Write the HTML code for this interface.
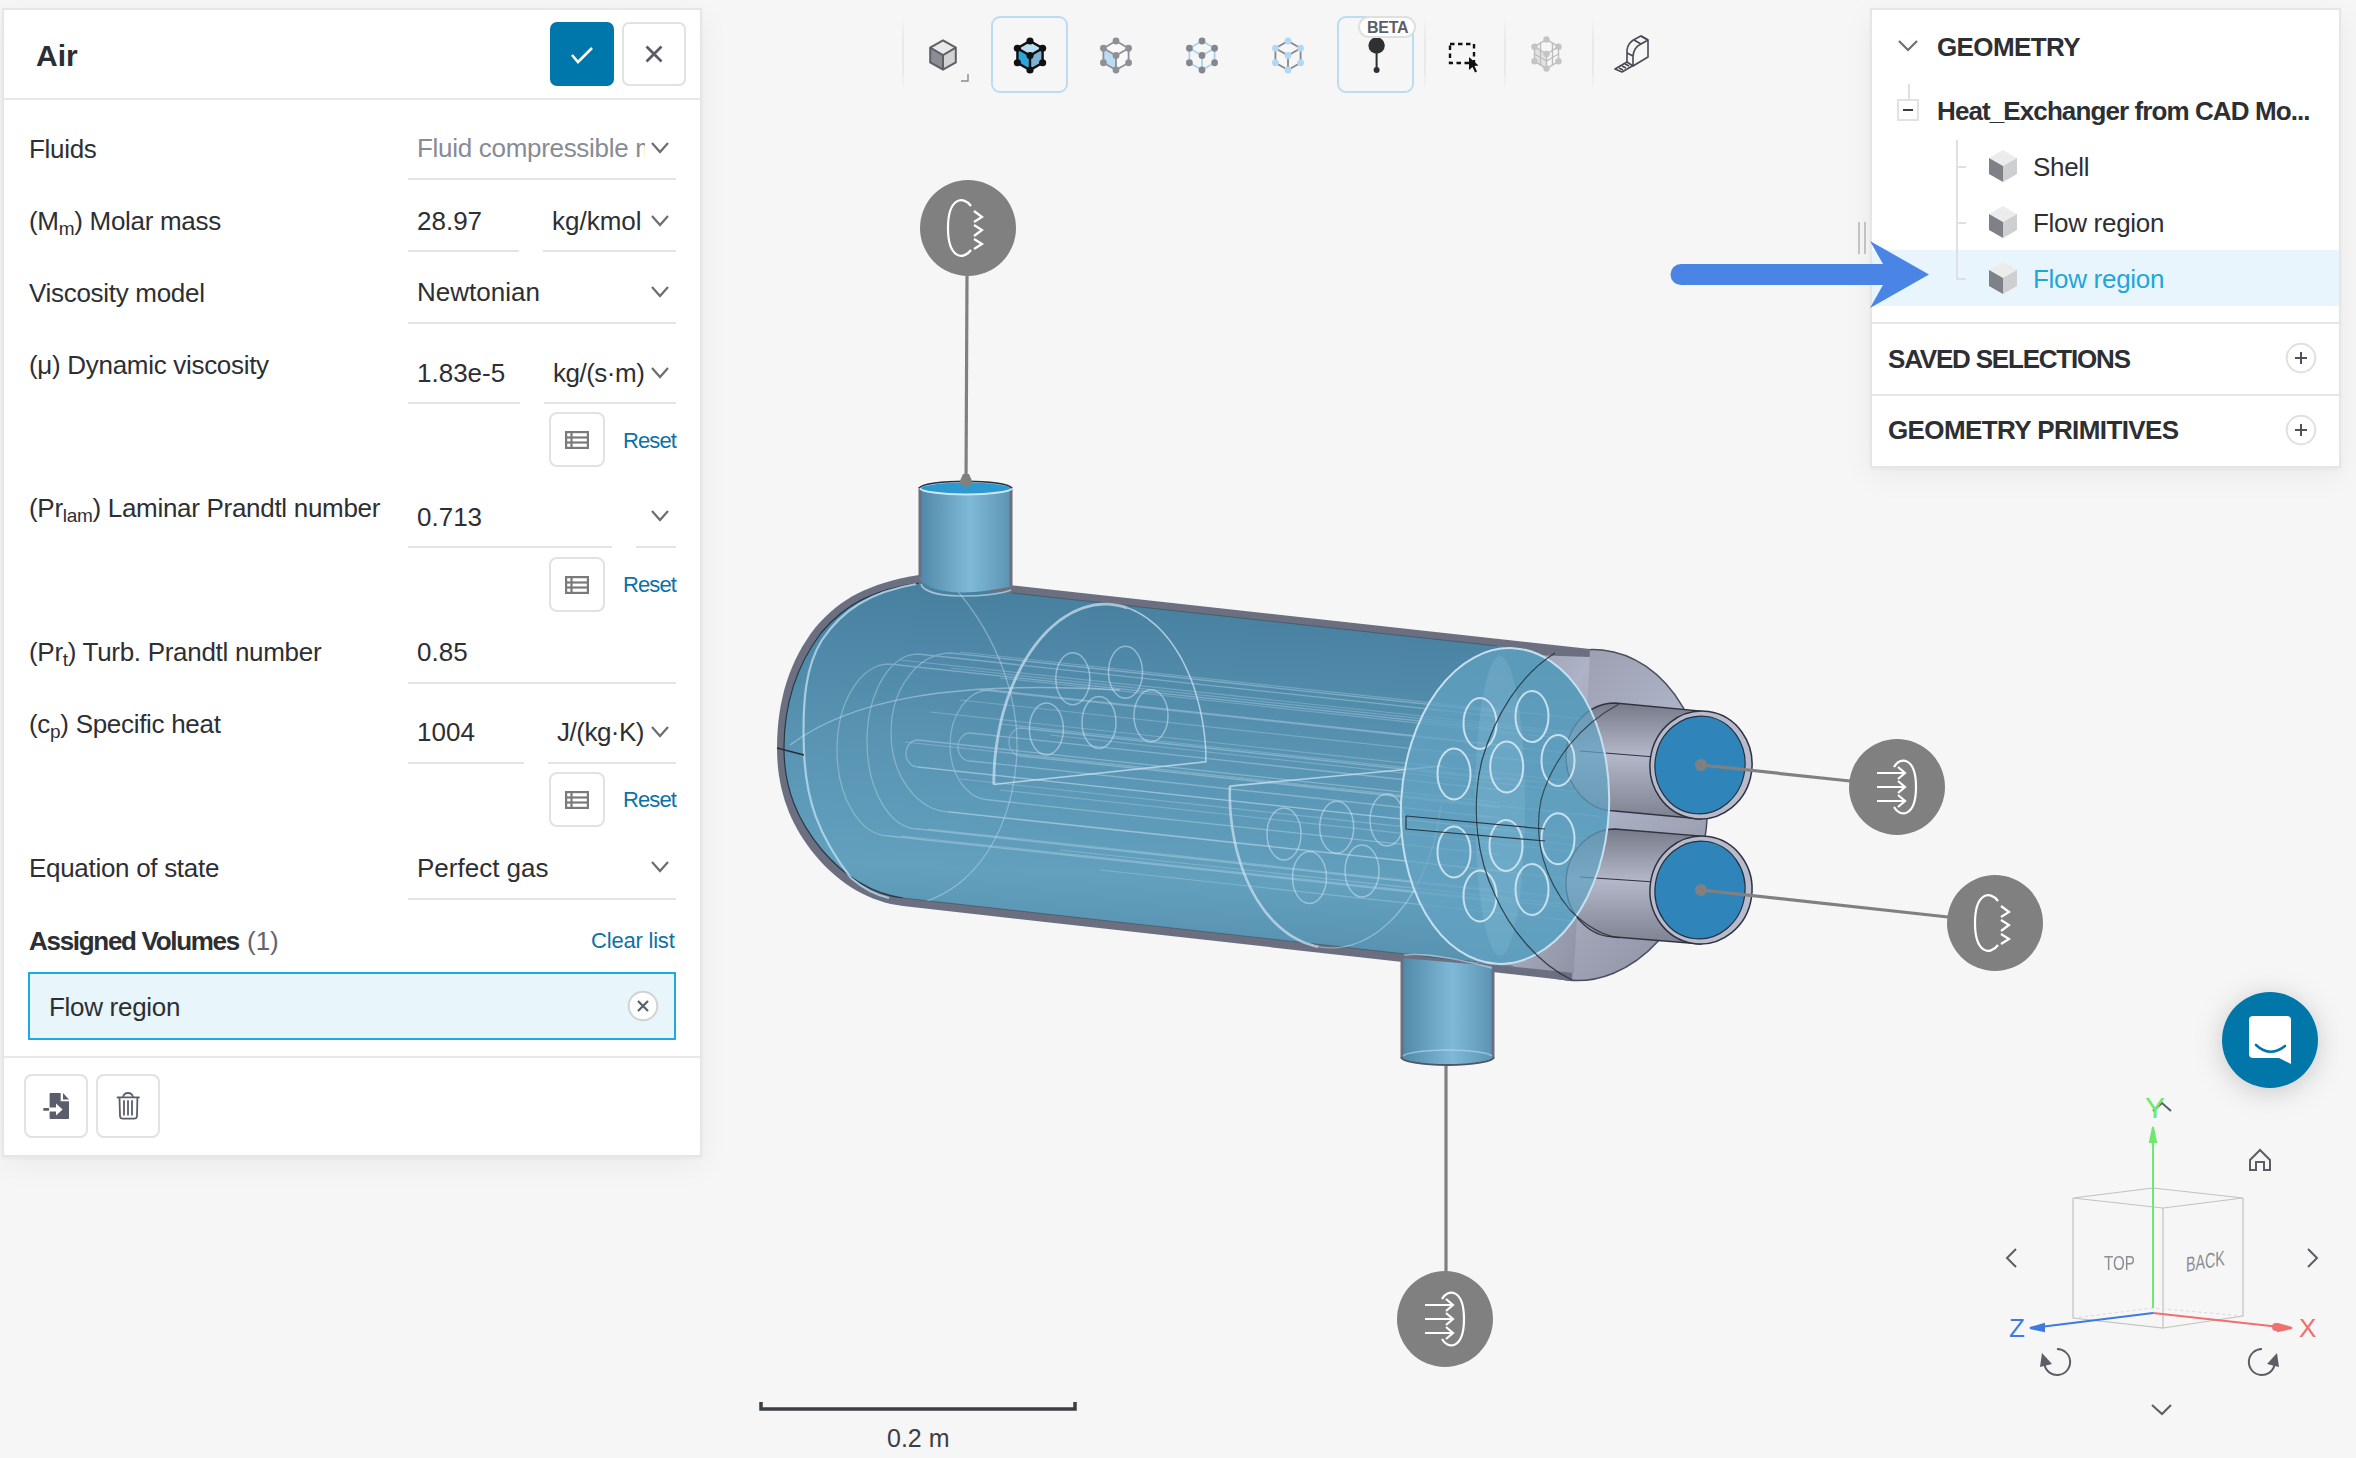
<!DOCTYPE html><html><head><meta charset="utf-8"><style>
html,body{margin:0;padding:0;width:2356px;height:1458px;overflow:hidden;background:#f6f6f6;font-family:"Liberation Sans",sans-serif;}
.t{position:absolute;line-height:1;white-space:nowrap;}
.r{position:absolute;}
svg.r{overflow:visible}
</style></head><body>
<svg class="r" style="left:0;top:0" width="2356" height="1458" viewBox="0 0 2356 1458">
<defs>
<linearGradient id="pipeV" x1="0" x2="1" y1="0" y2="0">
 <stop offset="0" stop-color="#4f88a6"/><stop offset="0.55" stop-color="#7fb9d8"/><stop offset="1" stop-color="#5a93b2"/>
</linearGradient>
<linearGradient id="bodyG" x1="0" x2="0" y1="0" y2="1" gradientTransform="rotate(6)">
 <stop offset="0" stop-color="#4880a0"/><stop offset="0.38" stop-color="#5893b2"/><stop offset="0.72" stop-color="#62a0be"/><stop offset="0.93" stop-color="#5590ae"/><stop offset="1" stop-color="#4a84a3"/>
</linearGradient>
<linearGradient id="domeG" x1="0" x2="1" y1="0" y2="1">
 <stop offset="0" stop-color="#8d91a1"/><stop offset="0.5" stop-color="#aeb2c6"/><stop offset="1" stop-color="#8b8fa0"/>
</linearGradient>
<linearGradient id="tubeG" x1="0" x2="0" y1="0" y2="1">
 <stop offset="0" stop-color="#767a88"/><stop offset="0.45" stop-color="#b3b7c9"/><stop offset="1" stop-color="#7d8190"/>
</linearGradient>
</defs>
<ellipse cx="1585" cy="815" rx="122" ry="166" transform="rotate(6 1585 815)" fill="url(#domeG)" stroke="#4a4d5c" stroke-width="1.5"/>
<path d="M919,575 L1590,649 L1572,981 L903,906 C870,902 840,885 815,855 C790,825 777,790 777,748 C777,700 790,660 815,628 C840,598 870,583 919,575 Z" fill="#6c6f80"/>
<path d="M1470,653 L1590,657 L1574,973 L1470,962 Z" fill="url(#domeG)"/>
<clipPath id="bodyClip"><path d="M919,583 L1497,646 L1513.3,648.2 L1521.4,649.1 L1529.4,651.0 L1537.3,653.8 L1545.0,657.6 L1552.4,662.3 L1559.5,667.9 L1566.3,674.3 L1572.7,681.5 L1578.7,689.6 L1584.3,698.3 L1589.3,707.7 L1593.9,717.7 L1597.9,728.2 L1601.3,739.2 L1604.1,750.6 L1606.3,762.4 L1607.9,774.5 L1608.9,786.7 L1609.2,799.0 L1608.9,811.4 L1607.9,823.8 L1606.3,836.1 L1604.1,848.1 L1601.2,859.9 L1597.8,871.4 L1593.8,882.5 L1589.2,893.1 L1584.2,903.1 L1578.6,912.6 L1572.6,921.4 L1566.2,929.5 L1559.4,936.8 L1552.2,943.4 L1544.8,949.1 L1537.1,953.9 L1529.2,957.7 L1521.2,960.7 L1513.1,962.7 L1504.9,963.7 L1496.7,963.8 L1513,966 L903,898 C872,894 846,878 822,850 C797,820 784,788 784,748 C784,703 797,665 821,633 C845,604 875,589 919,583 Z"/></clipPath>
<path d="M919,583 L1497,646 L1513.3,648.2 L1521.4,649.1 L1529.4,651.0 L1537.3,653.8 L1545.0,657.6 L1552.4,662.3 L1559.5,667.9 L1566.3,674.3 L1572.7,681.5 L1578.7,689.6 L1584.3,698.3 L1589.3,707.7 L1593.9,717.7 L1597.9,728.2 L1601.3,739.2 L1604.1,750.6 L1606.3,762.4 L1607.9,774.5 L1608.9,786.7 L1609.2,799.0 L1608.9,811.4 L1607.9,823.8 L1606.3,836.1 L1604.1,848.1 L1601.2,859.9 L1597.8,871.4 L1593.8,882.5 L1589.2,893.1 L1584.2,903.1 L1578.6,912.6 L1572.6,921.4 L1566.2,929.5 L1559.4,936.8 L1552.2,943.4 L1544.8,949.1 L1537.1,953.9 L1529.2,957.7 L1521.2,960.7 L1513.1,962.7 L1504.9,963.7 L1496.7,963.8 L1513,966 L903,898 C872,894 846,878 822,850 C797,820 784,788 784,748 C784,703 797,665 821,633 C845,604 875,589 919,583 Z" fill="url(#bodyG)"/>
<path d="M919,583 C875,589 845,604 821,633 C797,665 784,703 784,748 C784,788 797,820 822,850 C846,878 872,894 903,898" fill="none" stroke="#1f2a33" stroke-width="1.2" opacity="0.85"/>
<path d="M1012,593 L1497,646 M903,898 L1513,966" fill="none" stroke="#1f2a33" stroke-width="1" opacity="0.35"/>
<path d="M916,584 C870,592 842,610 822,640 C806,665 802,700 804,752 C806,800 818,835 851,878 C865,890 880,896 889,898" fill="none" stroke="#bcdcee" stroke-width="2.2" opacity="0.8"/>
<path d="M777,748 L804,755" stroke="#2a2e36" stroke-width="1.5"/>
<g clip-path="url(#bodyClip)">
<path d="M790,745 C850,700 950,680 1120,690" fill="none" stroke="#cfe6f3" stroke-width="1.3" opacity="0.45"/>
<path d="M955,588 C1000,640 1018,700 1017,748 C1016,800 998,850 962,881 C945,895 925,903 908,906" fill="none" stroke="#cfe6f3" stroke-width="1.3" opacity="0.4"/>
<g stroke="#cfe6f3" stroke-width="1.2" opacity="0.28" fill="none"><line x1="960" y1="652" x2="1600" y2="720.8"/><line x1="900" y1="660" x2="1600" y2="735.2"/><line x1="950" y1="668" x2="1600" y2="737.9"/><line x1="1000" y1="678" x2="1600" y2="742.5"/><line x1="980" y1="690" x2="1600" y2="756.6"/><line x1="960" y1="700" x2="1600" y2="768.8"/><line x1="930" y1="712" x2="1600" y2="784.0"/><line x1="1000" y1="724" x2="1600" y2="788.5"/><line x1="1050" y1="735" x2="1600" y2="794.1"/><line x1="905" y1="742" x2="1600" y2="816.7"/><line x1="1000" y1="752" x2="1600" y2="816.5"/><line x1="918" y1="767" x2="1600" y2="840.3"/><line x1="960" y1="779" x2="1600" y2="847.8"/><line x1="1000" y1="790" x2="1600" y2="854.5"/><line x1="948" y1="812" x2="1600" y2="882.1"/><line x1="928" y1="829" x2="1600" y2="901.2"/><line x1="901" y1="836" x2="1600" y2="911.1"/><line x1="1060" y1="850" x2="1600" y2="908.0"/><line x1="1100" y1="870" x2="1600" y2="923.8"/></g>
<g stroke="#cfe6f3" stroke-width="1.3" opacity="0.36" fill="none"><path d="M1500,729.7 L889,664 A52,86.0 0 0 0 889,836 L1500,901.7"/><path d="M1500,716.6 L918,654 A51,87.5 0 0 0 918,829 L1500,891.6"/><path d="M1500,712.0 L951,653 A60,79.5 0 0 0 951,812 L1500,871.0"/><path d="M1500,744.8 L990,690 A40,55.0 0 0 0 990,800 L1500,854.8"/><path d="M1500,802.6 L918,740 A12,13.5 0 0 0 918,767 L1500,829.6"/><path d="M1500,790.0 L970,733 A12,14.0 0 0 0 970,761 L1500,818.0"/><path d="M1500,779.5 L1021,728 A12,14.0 0 0 0 1021,756 L1500,807.5"/></g>
</g>
<g fill="none" stroke="#cfe6f3" opacity="0.75"><path d="M993.8,784.4 L993.9,776.5 L994.2,768.7 L994.7,760.9 L995.5,753.1 L996.5,745.4 L997.7,737.7 L999.1,730.1 L1000.7,722.6 L1002.5,715.2 L1004.6,707.9 L1006.8,700.8 L1009.3,693.8 L1011.9,687.0 L1014.7,680.4 L1017.7,674.0 L1020.8,667.8 L1024.2,661.8 L1027.7,656.1 L1031.3,650.6 L1035.1,645.4 L1039.0,640.4 L1043.1,635.7 L1047.2,631.3 L1051.5,627.2 L1055.9,623.5 L1060.3,620.0 L1064.9,616.9 L1069.5,614.1 L1074.2,611.6 L1079.0,609.5 L1083.8,607.7 L1088.6,606.3 L1093.4,605.2 L1098.3,604.5 L1103.2,604.2 L1108.0,604.2 L1112.9,604.6 L1117.7,605.3 L1122.5,606.4 L1127.2,607.8" stroke-width="2.8" stroke="#c8def0"/><path d="M1127.2,607.8 L1130.3,608.9 L1133.4,610.2 L1136.5,611.7 L1139.5,613.3 L1142.5,615.1 L1145.5,617.0 L1148.4,619.1 L1151.2,621.3 L1154.0,623.6 L1156.8,626.1 L1159.5,628.7 L1162.2,631.5 L1164.8,634.4 L1167.3,637.4 L1169.8,640.6 L1172.2,643.9 L1174.6,647.3 L1176.8,650.8 L1179.0,654.4 L1181.2,658.2 L1183.2,662.0 L1185.2,666.0 L1187.1,670.1 L1188.9,674.2 L1190.7,678.5 L1192.3,682.8 L1193.9,687.3 L1195.3,691.8 L1196.7,696.4 L1198.0,701.1 L1199.2,705.8 L1200.3,710.6 L1201.4,715.5 L1202.3,720.4 L1203.1,725.4 L1203.8,730.4 L1204.5,735.4 L1205.0,740.5 L1205.5,745.7 L1205.8,750.8" stroke-width="1.5"/><path d="M1205.8,750.8 L1205.8,761.8 L993.8,784.4" stroke-width="1.5"/><ellipse cx="1072.8" cy="678.8" rx="17" ry="26" stroke-width="1.5" opacity="0.7"/><ellipse cx="1125.5" cy="672.2" rx="17" ry="26" stroke-width="1.5" opacity="0.7"/><ellipse cx="1046.4" cy="729" rx="17" ry="26" stroke-width="1.5" opacity="0.7"/><ellipse cx="1099" cy="722.4" rx="17" ry="26" stroke-width="1.5" opacity="0.7"/><ellipse cx="1151" cy="715.8" rx="17" ry="26" stroke-width="1.5" opacity="0.7"/></g>
<g fill="none" stroke="#cfe6f3" opacity="0.75"><path d="M1229.9,786.1 L1229.8,792.0 L1229.8,797.8 L1230.0,803.7 L1230.3,809.5 L1230.8,815.3 L1231.4,821.0 L1232.1,826.7 L1233.0,832.3 L1234.0,837.9 L1235.1,843.4 L1236.4,848.9 L1237.8,854.2 L1239.3,859.5 L1240.9,864.7 L1242.7,869.8 L1244.6,874.7 L1246.6,879.6 L1248.8,884.3 L1251.0,888.9 L1253.4,893.3 L1255.8,897.7 L1258.4,901.8 L1261.1,905.8 L1263.9,909.7 L1266.7,913.4 L1269.7,916.9 L1272.8,920.3 L1275.9,923.5 L1279.1,926.5 L1282.4,929.3 L1285.7,931.9 L1289.1,934.4 L1292.6,936.6 L1296.2,938.7 L1299.8,940.5 L1303.4,942.2 L1307.1,943.6 L1310.8,944.8 L1314.5,945.9 L1318.3,946.7" stroke-width="2.6" stroke="#c8def0"/><path d="M1318.3,946.7 L1322.5,947.3 L1326.6,947.7 L1330.8,947.9 L1334.9,947.8 L1339.1,947.4 L1343.3,946.8 L1347.4,946.0 L1351.6,944.9 L1355.7,943.5 L1359.7,942.0 L1363.8,940.1 L1367.8,938.1 L1371.7,935.8 L1375.6,933.3 L1379.5,930.5 L1383.3,927.5 L1386.9,924.3 L1390.6,920.9 L1394.1,917.3 L1397.5,913.5 L1400.9,909.5 L1404.1,905.3 L1407.3,900.9 L1410.3,896.3 L1413.2,891.6 L1416.0,886.7 L1418.7,881.6 L1421.3,876.4 L1423.7,871.1 L1426.0,865.6 L1428.1,860.0 L1430.1,854.3 L1432.0,848.5 L1433.7,842.6 L1435.3,836.6 L1436.7,830.5 L1437.9,824.4 L1439.0,818.2 L1439.9,811.9 L1440.7,805.6" stroke-width="1.3" opacity="0.6"/><path d="M1229.9,786.1 L1442,766" stroke-width="1.6"/><ellipse cx="1284" cy="834" rx="17" ry="26" stroke-width="1.5" opacity="0.7"/><ellipse cx="1336.7" cy="827.3" rx="17" ry="26" stroke-width="1.5" opacity="0.7"/><ellipse cx="1387" cy="820" rx="17" ry="26" stroke-width="1.5" opacity="0.7"/><ellipse cx="1309.5" cy="877.5" rx="17" ry="26" stroke-width="1.5" opacity="0.7"/><ellipse cx="1362" cy="871" rx="17" ry="26" stroke-width="1.5" opacity="0.7"/></g>
<path d="M1615,703 L1701,711 L1701,819 L1615,811 A49,54 0 0 1 1615,703 Z" fill="url(#tubeG)" stroke="#2f3240" stroke-width="1.3"/>
<line x1="1580" y1="751" x2="1655" y2="757" stroke="#2f3240" stroke-width="1.2"/><path d="M1615,829 L1701,836 L1701,944 L1615,937 A49,54 0 0 1 1615,829 Z" fill="url(#tubeG)" stroke="#2f3240" stroke-width="1.3"/>
<line x1="1580" y1="877" x2="1655" y2="882" stroke="#2f3240" stroke-width="1.2"/><ellipse cx="1505" cy="806" rx="104" ry="158" transform="rotate(3 1505 806)" fill="#62a2c2" fill-opacity="0.72" stroke="#c4e0f0" stroke-width="2"/>
<ellipse cx="1500" cy="806" rx="25" ry="150" fill="#9fd0ea" opacity="0.18"/>
<g fill="none" stroke="#d8ecf7" stroke-width="2" opacity="0.85"><ellipse cx="1480" cy="723.5" rx="16.5" ry="25.5"/><ellipse cx="1532" cy="716.6" rx="16.5" ry="25.5"/><ellipse cx="1454" cy="774" rx="16.5" ry="25.5"/><ellipse cx="1506.7" cy="767" rx="16.5" ry="25.5"/><ellipse cx="1558" cy="760.5" rx="16.5" ry="25.5"/><ellipse cx="1454" cy="852" rx="16.5" ry="25.5"/><ellipse cx="1506" cy="845.5" rx="16.5" ry="25.5"/><ellipse cx="1558" cy="838.7" rx="16.5" ry="25.5"/><ellipse cx="1480" cy="896" rx="16.5" ry="25.5"/><ellipse cx="1532" cy="889.4" rx="16.5" ry="25.5"/></g>
<path d="M1406,816 L1545,829 M1406,816 L1406,829 L1545,841" fill="none" stroke="#2b3a44" stroke-width="1.2"/>
<path d="M1555,653 C1520,675 1495,715 1482,760 C1470,810 1478,860 1495,895 C1510,930 1540,965 1572,980" fill="none" stroke="#1d2a33" stroke-width="1.2" opacity="0.8"/>
<path d="M1619,704 C1580,725 1552,760 1541,800 C1533,840 1545,880 1570,910 C1585,925 1600,935 1619,938" fill="none" stroke="#1d2a33" stroke-width="1.1" opacity="0.75"/>
<ellipse cx="1701" cy="765" rx="51" ry="54" transform="rotate(8 1701 765)" fill="#b7bbcb" stroke="#2f3240" stroke-width="1.5"/>
<ellipse cx="1700" cy="765" rx="45" ry="49" transform="rotate(8 1700 765)" fill="#2f85ba" stroke="#233040" stroke-width="1.2"/>
<ellipse cx="1701" cy="890" rx="51" ry="54" transform="rotate(8 1701 890)" fill="#b7bbcb" stroke="#2f3240" stroke-width="1.5"/>
<ellipse cx="1700" cy="890" rx="45" ry="49" transform="rotate(8 1700 890)" fill="#2f85ba" stroke="#233040" stroke-width="1.2"/>
<path d="M919,487 L919,578 C930,595 970,596 1012,586 L1012,487 Z" fill="url(#pipeV)"/>
<path d="M920,487 L920,578 M1011,487 L1011,586" stroke="#6b6f80" stroke-width="3"/>
<path d="M921,584 C925,600 990,598 1011,590" fill="none" stroke="#c8dcea" stroke-width="1.6" opacity="0.7"/>
<ellipse cx="966" cy="488" rx="46" ry="6.5" fill="#2c9ad0" stroke="#cde6f3" stroke-width="2"/>
<path d="M919,488 A47,8 0 0 1 1012,488" fill="none" stroke="#2a2e38" stroke-width="1.5"/>
<path d="M1401,958 L1401,1057 A46,8 0 0 0 1494,1057 L1494,966 Z" fill="url(#pipeV)"/>
<path d="M1402,958 L1402,1057 M1493,966 L1493,1057" stroke="#6b6f80" stroke-width="3"/>
<path d="M1401,1057 A46.5,8 0 0 0 1494,1057" fill="none" stroke="#4d5563" stroke-width="1.8"/>
<path d="M1403,1056 A45,7 0 0 1 1492,1056" fill="none" stroke="#b9dcee" stroke-width="1.5" opacity="0.6"/>
<path d="M1404,955 C1430,952 1470,962 1492,968" fill="none" stroke="#c8dcea" stroke-width="1.5" opacity="0.6"/>
<g stroke="#808080" stroke-width="3.2" fill="none"><line x1="967" y1="276" x2="966" y2="487"/><line x1="1701" y1="765" x2="1850" y2="781"/><line x1="1701" y1="890" x2="1948" y2="917"/><line x1="1446" y1="1066" x2="1446" y2="1272"/></g>
<g fill="#808080"><path d="M963,474 L969,474 L973,483 Q966,490 959,483 Z"/><circle cx="1701" cy="765" r="6"/><circle cx="1701" cy="890" r="6"/></g>
<circle cx="968" cy="228" r="48" fill="#808080"/><circle cx="1897" cy="787" r="48" fill="#808080"/><circle cx="1995" cy="923" r="48" fill="#808080"/><circle cx="1445" cy="1319" r="48" fill="#808080"/><g transform="translate(968,228)" fill="none" stroke="#fff" stroke-width="2.2"><path d="M3,-22 C-5,-33 -20,-30 -20,0 C-20,30 -5,33 3,22"/><path d="M6,-17 L14,-11 L6,-6 M6,-3 L14,2 L6,8 M6,11 L14,16 L6,21"/></g><g transform="translate(1995,923)" fill="none" stroke="#fff" stroke-width="2.2"><path d="M3,-22 C-5,-33 -20,-30 -20,0 C-20,30 -5,33 3,22"/><path d="M6,-17 L14,-11 L6,-6 M6,-3 L14,2 L6,8 M6,11 L14,16 L6,21"/></g><g transform="translate(1897,787)" fill="none" stroke="#fff" stroke-width="2.2"><path d="M-3,-20 C3,-31 19,-30 19,0 C19,30 3,31 -3,20"/><path d="M-20,-14 L8,-14 M1,-20 L8,-14 L1,-8 M-20,0 L8,0 M1,-6 L8,0 L1,6 M-20,14 L8,14 M1,8 L8,14 L1,20"/></g><g transform="translate(1445,1319)" fill="none" stroke="#fff" stroke-width="2.2"><path d="M-3,-20 C3,-31 19,-30 19,0 C19,30 3,31 -3,20"/><path d="M-20,-14 L8,-14 M1,-20 L8,-14 L1,-8 M-20,0 L8,0 M1,-6 L8,0 L1,6 M-20,14 L8,14 M1,8 L8,14 L1,20"/></g>
<path d="M761,1402 L761,1409 L1075,1409 L1075,1402" fill="none" stroke="#3b3e44" stroke-width="3.5"/>
<g stroke="#c6c6c6" stroke-width="2"><line x1="1859" y1="222" x2="1859" y2="254"/><line x1="1865" y1="222" x2="1865" y2="254"/></g>
<circle cx="2270" cy="1040" r="48" fill="#0076a9" style="filter:drop-shadow(0 4px 14px rgba(0,0,0,0.18))"/>
<path d="M2253,1016 L2287,1016 Q2291,1016 2291,1020 L2291,1064 L2279,1058 L2253,1058 Q2249,1058 2249,1054 L2249,1020 Q2249,1016 2253,1016 Z" fill="#fff"/>
<path d="M2256,1045 Q2270,1058 2285,1046" fill="none" stroke="#0076a9" stroke-width="2.6" stroke-linecap="round"/>
<g fill="none" stroke="#c2c2c2" stroke-width="1.2"><path d="M2073,1198 L2153,1188 L2243,1198 L2163,1208 Z"/><path d="M2073,1198 L2073,1318 L2163,1328 L2163,1208"/><path d="M2163,1328 L2243,1316 L2243,1198"/></g>
<path d="M2073,1318 L2153,1308 L2243,1316" fill="none" stroke="#d8d8d8" stroke-width="1" stroke-dasharray="3,3"/>
<g stroke="#6ee86e" stroke-width="2" fill="#6ee86e"><line x1="2153" y1="1308" x2="2153" y2="1135"/><path d="M2153,1127 L2150,1142 L2156,1142 Z"/></g>
<g stroke="#3d7be0" stroke-width="2" fill="#3d7be0"><line x1="2153" y1="1313" x2="2040" y2="1327"/><path d="M2030,1328 L2044,1324 L2044,1331 Z"/></g>
<g stroke="#f07070" stroke-width="2" fill="#f07070"><line x1="2153" y1="1313" x2="2280" y2="1327"/><path d="M2292,1328 L2278,1324 L2278,1331 Z"/><circle cx="2276" cy="1327" r="3"/></g>
<g fill="none" stroke="#5b5e66" stroke-width="2"><polyline points="2153,1111 2162,1103 2171,1111"/><polyline points="2016,1249 2007,1258 2016,1267"/><polyline points="2308,1249 2317,1258 2308,1267"/><polyline points="2152,1405 2162,1414 2171,1405"/><path d="M2250,1170 L2250,1160 L2260,1150 L2270,1160 L2270,1170 L2264,1170 L2264,1162 L2256,1162 L2256,1170 Z"/><path d="M2057,1349 A13,13 0 1 1 2044.5,1365"/><path d="M2262,1349 A13,13 0 1 0 2274.5,1365"/></g>
<g fill="#5b5e66"><path d="M2042,1353 L2040,1367 L2052,1364 Z"/><path d="M2277,1353 L2279,1367 L2267,1364 Z"/></g>
</svg>
<div class="t" style="left:2145px;top:1092.6px;font-size:30px;color:#6ee86e;font-weight:normal;">Y</div>
<div class="t" style="left:2009px;top:1315.0px;font-size:26px;color:#3d7be0;font-weight:normal;">Z</div>
<div class="t" style="left:2299px;top:1315.0px;font-size:26px;color:#f07070;font-weight:normal;">X</div>
<div class="t" style="left:2104px;top:1252.2px;font-size:21px;color:#8a8d94;font-weight:normal;transform:scaleX(0.72);transform-origin:0 0">TOP</div>
<div class="t" style="left:2186px;top:1254.2px;font-size:21px;color:#8a8d94;font-weight:normal;transform:scaleX(0.68) skewY(-7deg);transform-origin:0 0">BACK</div>
<div class="t" style="left:887px;top:1425.8px;font-size:25px;color:#3b3e44;font-weight:normal;">0.2 m</div>
<div class="r" style="left:2px;top:8px;width:696px;height:1145px;background:#fff;border:2px solid #e6e6e6;box-shadow:0 2px 3px rgba(0,0,0,0.03),0 8px 30px rgba(0,0,0,0.05)"></div>
<div class="t" style="left:36px;top:40.6px;font-size:30px;color:#2d2e33;font-weight:bold;">Air</div>
<div class="r" style="left:550px;top:22px;width:64px;height:64px;background:#0077aa;border-radius:7px"></div>
<svg class="r" style="left:550px;top:22px" width="64" height="64"><polyline points="22,33 28,40 42,26" fill="none" stroke="#fff" stroke-width="2.6"/></svg>
<div class="r" style="left:622px;top:22px;width:64px;height:64px;box-sizing:border-box;border:2px solid #e2e2e2;border-radius:7px;background:#fff"></div>
<svg class="r" style="left:622px;top:22px" width="64" height="64"><path d="M24.5,24.5 L39.5,39.5 M39.5,24.5 L24.5,39.5" fill="none" stroke="#5a5d66" stroke-width="2.8"/></svg>
<div class="r" style="left:4px;top:98px;width:696px;height:2px;background:#e8e8e8"></div>
<div class="t" style="left:29px;top:136.0px;font-size:26px;color:#2d2f33;font-weight:normal;letter-spacing:-0.3px">Fluids</div>
<div class="t" style="left:29px;top:208.0px;font-size:26px;color:#2d2f33;font-weight:normal;letter-spacing:-0.3px">(M<sub style="font-size:19px;vertical-align:-5px;line-height:0">m</sub>) Molar mass</div>
<div class="t" style="left:29px;top:280.0px;font-size:26px;color:#2d2f33;font-weight:normal;letter-spacing:-0.3px">Viscosity model</div>
<div class="t" style="left:29px;top:352.0px;font-size:26px;color:#2d2f33;font-weight:normal;letter-spacing:-0.3px">(&mu;) Dynamic viscosity</div>
<div class="t" style="left:29px;top:495.0px;font-size:26px;color:#2d2f33;font-weight:normal;letter-spacing:-0.3px">(Pr<sub style="font-size:19px;vertical-align:-5px;line-height:0">lam</sub>) Laminar Prandtl number</div>
<div class="t" style="left:29px;top:639.0px;font-size:26px;color:#2d2f33;font-weight:normal;letter-spacing:-0.3px">(Pr<sub style="font-size:19px;vertical-align:-5px;line-height:0">t</sub>) Turb. Prandtl number</div>
<div class="t" style="left:29px;top:711.0px;font-size:26px;color:#2d2f33;font-weight:normal;letter-spacing:-0.3px">(c<sub style="font-size:19px;vertical-align:-5px;line-height:0">p</sub>) Specific heat</div>
<div class="t" style="left:29px;top:855.0px;font-size:26px;color:#2d2f33;font-weight:normal;letter-spacing:-0.3px">Equation of state</div>
<div class="r" style="left:417px;top:135.0px;width:228px;overflow:hidden;height:34px"><div class="t" style="left:0;top:0;font-size:26px;color:#878b94;letter-spacing:-0.3px">Fluid compressible medium</div></div>
<svg class="r" style="left:650px;top:141px" width="20" height="13"><polyline points="2,2 10.0,11 18,2" fill="none" stroke="#6b6e75" stroke-width="2.2"/></svg>
<div class="r" style="left:408px;top:178px;width:268px;height:2px;background:#e4e4e4"></div>
<div class="t" style="left:417px;top:208.0px;font-size:26px;color:#2d2f33;font-weight:normal;">28.97</div>
<div class="t" style="left:552px;top:208.0px;font-size:26px;color:#2d2f33;font-weight:normal;">kg/kmol</div>
<svg class="r" style="left:650px;top:214px" width="20" height="13"><polyline points="2,2 10.0,11 18,2" fill="none" stroke="#6b6e75" stroke-width="2.2"/></svg>
<div class="r" style="left:408px;top:250px;width:111px;height:2px;background:#e4e4e4"></div>
<div class="r" style="left:543px;top:250px;width:133px;height:2px;background:#e4e4e4"></div>
<div class="t" style="left:417px;top:279.0px;font-size:26px;color:#2d2f33;font-weight:normal;">Newtonian</div>
<svg class="r" style="left:650px;top:285px" width="20" height="13"><polyline points="2,2 10.0,11 18,2" fill="none" stroke="#6b6e75" stroke-width="2.2"/></svg>
<div class="r" style="left:408px;top:322px;width:268px;height:2px;background:#e4e4e4"></div>
<div class="t" style="left:417px;top:360.0px;font-size:26px;color:#2d2f33;font-weight:normal;">1.83e-5</div>
<div class="t" style="left:553px;top:360.0px;font-size:26px;color:#2d2f33;font-weight:normal;letter-spacing:-0.5px">kg/(s&middot;m)</div>
<svg class="r" style="left:650px;top:366px" width="20" height="13"><polyline points="2,2 10.0,11 18,2" fill="none" stroke="#6b6e75" stroke-width="2.2"/></svg>
<div class="r" style="left:408px;top:402px;width:112px;height:2px;background:#e4e4e4"></div>
<div class="r" style="left:544px;top:402px;width:132px;height:2px;background:#e4e4e4"></div>
<div class="r" style="left:549px;top:412px;width:56px;height:55px;box-sizing:border-box;border:2px solid #e2e2e2;border-radius:8px;background:#fff"></div>
<svg class="r" style="left:565px;top:431px" width="24" height="18"><g fill="none" stroke="#7a7a7a" stroke-width="2.2"><rect x="1.1" y="1.1" width="21.8" height="15.8"/><line x1="1" y1="6.5" x2="23" y2="6.5"/><line x1="1" y1="11.5" x2="23" y2="11.5"/><line x1="6.5" y1="1" x2="6.5" y2="17"/></g></svg>
<div class="t" style="left:623px;top:430.4px;font-size:22px;color:#0b72a8;font-weight:normal;letter-spacing:-0.9px">Reset</div>
<div class="t" style="left:417px;top:504.0px;font-size:26px;color:#2d2f33;font-weight:normal;">0.713</div>
<svg class="r" style="left:650px;top:509px" width="20" height="13"><polyline points="2,2 10.0,11 18,2" fill="none" stroke="#6b6e75" stroke-width="2.2"/></svg>
<div class="r" style="left:408px;top:546px;width:204px;height:2px;background:#e4e4e4"></div>
<div class="r" style="left:636px;top:546px;width:40px;height:2px;background:#e4e4e4"></div>
<div class="r" style="left:549px;top:557px;width:56px;height:55px;box-sizing:border-box;border:2px solid #e2e2e2;border-radius:8px;background:#fff"></div>
<svg class="r" style="left:565px;top:576px" width="24" height="18"><g fill="none" stroke="#7a7a7a" stroke-width="2.2"><rect x="1.1" y="1.1" width="21.8" height="15.8"/><line x1="1" y1="6.5" x2="23" y2="6.5"/><line x1="1" y1="11.5" x2="23" y2="11.5"/><line x1="6.5" y1="1" x2="6.5" y2="17"/></g></svg>
<div class="t" style="left:623px;top:574.4px;font-size:22px;color:#0b72a8;font-weight:normal;letter-spacing:-0.9px">Reset</div>
<div class="t" style="left:417px;top:639.0px;font-size:26px;color:#2d2f33;font-weight:normal;">0.85</div>
<div class="r" style="left:408px;top:682px;width:268px;height:2px;background:#e4e4e4"></div>
<div class="t" style="left:417px;top:719.0px;font-size:26px;color:#2d2f33;font-weight:normal;">1004</div>
<div class="t" style="left:557px;top:719.0px;font-size:26px;color:#2d2f33;font-weight:normal;letter-spacing:-0.5px">J/(kg&middot;K)</div>
<svg class="r" style="left:650px;top:725px" width="20" height="13"><polyline points="2,2 10.0,11 18,2" fill="none" stroke="#6b6e75" stroke-width="2.2"/></svg>
<div class="r" style="left:408px;top:762px;width:116px;height:2px;background:#e4e4e4"></div>
<div class="r" style="left:548px;top:762px;width:128px;height:2px;background:#e4e4e4"></div>
<div class="r" style="left:549px;top:772px;width:56px;height:55px;box-sizing:border-box;border:2px solid #e2e2e2;border-radius:8px;background:#fff"></div>
<svg class="r" style="left:565px;top:791px" width="24" height="18"><g fill="none" stroke="#7a7a7a" stroke-width="2.2"><rect x="1.1" y="1.1" width="21.8" height="15.8"/><line x1="1" y1="6.5" x2="23" y2="6.5"/><line x1="1" y1="11.5" x2="23" y2="11.5"/><line x1="6.5" y1="1" x2="6.5" y2="17"/></g></svg>
<div class="t" style="left:623px;top:789.4px;font-size:22px;color:#0b72a8;font-weight:normal;letter-spacing:-0.9px">Reset</div>
<div class="t" style="left:417px;top:855.0px;font-size:26px;color:#2d2f33;font-weight:normal;">Perfect gas</div>
<svg class="r" style="left:650px;top:860px" width="20" height="13"><polyline points="2,2 10.0,11 18,2" fill="none" stroke="#6b6e75" stroke-width="2.2"/></svg>
<div class="r" style="left:408px;top:898px;width:268px;height:2px;background:#e4e4e4"></div>
<div class="t" style="left:29px;top:928.0px;font-size:26px;color:#2d2f33;font-weight:bold;letter-spacing:-1.3px">Assigned Volumes</div>
<div class="t" style="left:247px;top:928.0px;font-size:26px;color:#60646e;font-weight:normal;">(1)</div>
<div class="t" style="left:591px;top:930.4px;font-size:22px;color:#0b72a8;font-weight:normal;letter-spacing:-0.2px">Clear list</div>
<div class="r" style="left:28px;top:972px;width:648px;height:68px;box-sizing:border-box;border:2.5px solid #1eaade;background:#e8f5fb"></div>
<div class="t" style="left:49px;top:994.0px;font-size:26px;color:#2d2f33;font-weight:normal;letter-spacing:-0.3px">Flow region</div>
<svg class="r" style="left:627px;top:990px" width="32" height="32"><circle cx="16" cy="16" r="14.3" fill="#fff" stroke="#d2d2d2" stroke-width="2"/><path d="M11,11 L21,21 M21,11 L11,21" stroke="#5b5f6b" stroke-width="2.2"/></svg>
<div class="r" style="left:4px;top:1056px;width:696px;height:2px;background:#e8e8e8"></div>
<div class="r" style="left:24px;top:1074px;width:64px;height:64px;box-sizing:border-box;border:2px solid #e2e2e2;border-radius:8px"></div>
<div class="r" style="left:96px;top:1074px;width:64px;height:64px;box-sizing:border-box;border:2px solid #e2e2e2;border-radius:8px"></div>
<svg class="r" style="left:40px;top:1090px" width="32" height="32"><path d="M10.6,3 L20.7,3 L20.7,11.2 L29,11.2 L29,28 Q29,29 28,29 L10.6,29 Q9.6,29 9.6,28 L9.6,4 Q9.6,3 10.6,3 Z" fill="#5a5e6b"/><path d="M23,3 L29,9.6 L23,9.6 Z" fill="#5a5e6b"/><path d="M9,17.6 L16,17.6 L16,13.4 L22.6,19.5 L16,25.4 L16,21.4 L9,21.4 Z" fill="#fff"/><rect x="3.2" y="18" width="6" height="2.8" rx="1" fill="#5a5e6b"/></svg>
<svg class="r" style="left:114px;top:1090px" width="30" height="32"><g fill="none" stroke="#5a5e6b" stroke-width="1.8" stroke-linecap="round"><path d="M3.5,7.4 L25,7.4"/><path d="M9,7 Q10,3 14,3 Q18,3 19,7"/><path d="M5.5,8 L6,26 Q6.2,28.7 9,28.7 L20,28.7 Q22.8,28.7 23,26 L23.4,8"/><path d="M10,11 L10,24.8 M14,11 L14,24.8 M18,11 L18,24.8"/></g></svg>
<div class="r" style="left:1870px;top:8px;width:467px;height:456px;background:#fff;border:2px solid #e6e6e6;box-shadow:0 2px 3px rgba(0,0,0,0.03),0 8px 30px rgba(0,0,0,0.05)"></div>
<svg class="r" style="left:1897px;top:39px" width="22" height="13"><polyline points="2,2 11.0,11 20,2" fill="none" stroke="#6b6e75" stroke-width="2.2"/></svg>
<div class="t" style="left:1937px;top:34.0px;font-size:26px;color:#2d2f33;font-weight:bold;letter-spacing:-0.6px">GEOMETRY</div>
<div class="r" style="left:1908px;top:84px;width:2px;height:15px;background:#e0e0e0"></div>
<div class="r" style="left:1897px;top:99px;width:22px;height:22px;box-sizing:border-box;border:2px solid #e2e2e2"></div>
<div class="r" style="left:1903px;top:109px;width:10px;height:2px;background:#3a3c42"></div>
<div class="t" style="left:1937px;top:98.0px;font-size:26px;color:#2d2f33;font-weight:bold;letter-spacing:-0.9px">Heat_Exchanger from CAD Mo...</div>
<div class="r" style="left:1872px;top:250px;width:467px;height:56px;background:#e9f5fc"></div>
<div class="r" style="left:1956px;top:140px;width:2px;height:139px;background:#e0e0e0"></div>
<div class="r" style="left:1956px;top:166px;width:10px;height:2px;background:#e0e0e0"></div>
<div class="r" style="left:1956px;top:222px;width:10px;height:2px;background:#e0e0e0"></div>
<div class="r" style="left:1956px;top:278px;width:10px;height:2px;background:#e0e0e0"></div>
<svg class="r" style="left:1989px;top:150px" width="28" height="32"><path d="M14,0 L28,8.0 L14,16 L0,8.0 Z" fill="#ececec"/><path d="M0,8.0 L14,16 L14,32 L0,24.0 Z" fill="#7f8189"/><path d="M28,8.0 L14,16 L14,32 L28,24.0 Z" fill="#cfcfd2"/></svg>
<div class="t" style="left:2033px;top:154.0px;font-size:26px;color:#2d2f33;font-weight:normal;letter-spacing:-0.3px">Shell</div>
<svg class="r" style="left:1989px;top:206px" width="28" height="32"><path d="M14,0 L28,8.0 L14,16 L0,8.0 Z" fill="#ececec"/><path d="M0,8.0 L14,16 L14,32 L0,24.0 Z" fill="#7f8189"/><path d="M28,8.0 L14,16 L14,32 L28,24.0 Z" fill="#cfcfd2"/></svg>
<div class="t" style="left:2033px;top:210.0px;font-size:26px;color:#2d2f33;font-weight:normal;letter-spacing:-0.3px">Flow region</div>
<svg class="r" style="left:1989px;top:262px" width="28" height="32"><path d="M14,0 L28,8.0 L14,16 L0,8.0 Z" fill="#ececec"/><path d="M0,8.0 L14,16 L14,32 L0,24.0 Z" fill="#7f8189"/><path d="M28,8.0 L14,16 L14,32 L28,24.0 Z" fill="#cfcfd2"/></svg>
<div class="t" style="left:2033px;top:266.0px;font-size:26px;color:#22a6da;font-weight:normal;letter-spacing:-0.3px">Flow region</div>
<div class="r" style="left:1872px;top:322px;width:467px;height:2px;background:#e6e6e6"></div>
<div class="r" style="left:1872px;top:394px;width:467px;height:2px;background:#e6e6e6"></div>
<div class="t" style="left:1888px;top:346.0px;font-size:26px;color:#2d2f33;font-weight:bold;letter-spacing:-1.2px">SAVED SELECTIONS</div>
<div class="t" style="left:1888px;top:417.0px;font-size:26px;color:#2d2f33;font-weight:bold;letter-spacing:-0.6px">GEOMETRY PRIMITIVES</div>
<svg class="r" style="left:2285px;top:342px" width="32" height="32"><circle cx="16" cy="16" r="14.3" fill="#fff" stroke="#e0e0e0" stroke-width="2"/><path d="M16,10 L16,22 M10,16 L22,16" stroke="#4f525c" stroke-width="2"/></svg>
<svg class="r" style="left:2285px;top:414px" width="32" height="32"><circle cx="16" cy="16" r="14.3" fill="#fff" stroke="#e0e0e0" stroke-width="2"/><path d="M16,10 L16,22 M10,16 L22,16" stroke="#4f525c" stroke-width="2"/></svg>
<svg class="r" style="left:0;top:0" width="2356" height="400"><path d="M1681,264 L1883,264 L1870,241 L1929,274.5 L1870,308 L1883,285 L1681,285 A10.5,10.5 0 0 1 1681,264 Z" fill="#4a84e4"/>
</svg>
<div class="r" style="left:902px;top:19px;width:2px;height:71px;background:linear-gradient(#f5f5f5,#e9e9e9 30%,#e9e9e9 70%,#f5f5f5)"></div>
<div class="r" style="left:1424px;top:19px;width:2px;height:71px;background:linear-gradient(#f5f5f5,#e9e9e9 30%,#e9e9e9 70%,#f5f5f5)"></div>
<div class="r" style="left:1504px;top:19px;width:2px;height:71px;background:linear-gradient(#f5f5f5,#e9e9e9 30%,#e9e9e9 70%,#f5f5f5)"></div>
<div class="r" style="left:1592px;top:19px;width:2px;height:71px;background:linear-gradient(#f5f5f5,#e9e9e9 30%,#e9e9e9 70%,#f5f5f5)"></div>
<div class="r" style="left:991px;top:16px;width:77px;height:77px;box-sizing:border-box;border:2px solid #bcdcf2;border-radius:9px"></div>
<div class="r" style="left:1337px;top:16px;width:77px;height:77px;box-sizing:border-box;border:2px solid #bcdcf2;border-radius:9px"></div>
<svg class="r" style="left:0;top:0" width="2356" height="120">
<polygon points="943.0,40.4 955.8,47.7 943.0,55.0 930.2,47.7" fill="#e9e9e9"/><polygon points="930.2,47.7 943.0,55.0 943.0,69.6 930.2,62.3" fill="#8b8d95"/><polygon points="955.8,47.7 955.8,62.3 943.0,69.6 943.0,55.0" fill="#d2d2d4"/><polygon points="943.0,40.4 955.8,47.7 955.8,62.3 943.0,69.6 930.2,62.3 930.2,47.7" fill="none" stroke="#5d6068" stroke-width="2"/><polyline points="930.2,47.7 943.0,55.0 955.8,47.7" fill="none" stroke="#5d6068" stroke-width="2"/><line x1="943" y1="55" x2="943" y2="69.6" stroke="#5d6068" stroke-width="2"/><polyline points="961,81 968,81 968,74" fill="none" stroke="#8a8a8a" stroke-width="1.4"/>
<polygon points="1030.0,41.0 1042.6,48.2 1030.0,55.5 1017.4,48.2" fill="#bcdcf0"/><polygon points="1017.4,48.2 1030.0,55.5 1030.0,70.0 1017.4,62.8" fill="#2ba6dc"/><polygon points="1042.6,48.2 1042.6,62.8 1030.0,70.0 1030.0,55.5" fill="#7db2d2"/><polygon points="1030.0,41.0 1042.6,48.2 1042.6,62.8 1030.0,70.0 1017.4,62.8 1017.4,48.2" fill="none" stroke="#111" stroke-width="2.4"/><polyline points="1017.4,48.2 1030.0,55.5 1042.6,48.2" fill="none" stroke="#111" stroke-width="2.4"/><line x1="1030" y1="55.5" x2="1030" y2="70" stroke="#111" stroke-width="2.4"/><circle cx="1030" cy="41.0" r="3.6" fill="#111"/><circle cx="1042.6" cy="48.25" r="3.6" fill="#111"/><circle cx="1042.6" cy="62.75" r="3.6" fill="#111"/><circle cx="1030" cy="70.0" r="3.6" fill="#111"/><circle cx="1017.4" cy="62.75" r="3.6" fill="#111"/><circle cx="1017.4" cy="48.25" r="3.6" fill="#111"/><circle cx="1030" cy="55.5" r="3.6" fill="#111"/>
<polygon points="1103.4,48.2 1116.0,55.5 1116.0,70.0 1103.4,62.8" fill="#bcdcf3"/><polygon points="1116.0,41.0 1128.6,48.2 1116.0,55.5 1103.4,48.2" fill="#fafafa"/><polygon points="1128.6,48.2 1128.6,62.8 1116.0,70.0 1116.0,55.5" fill="#fafafa"/><polygon points="1116.0,41.0 1128.6,48.2 1128.6,62.8 1116.0,70.0 1103.4,62.8 1103.4,48.2" fill="none" stroke="#8e9098" stroke-width="1.8"/><polyline points="1103.4,48.2 1116.0,55.5 1128.6,48.2" fill="none" stroke="#8e9098" stroke-width="1.8"/><line x1="1116" y1="55.5" x2="1116" y2="70" stroke="#8e9098" stroke-width="1.8"/><circle cx="1116" cy="41.0" r="3.4" fill="#8e9098"/><circle cx="1128.6" cy="48.25" r="3.4" fill="#8e9098"/><circle cx="1128.6" cy="62.75" r="3.4" fill="#8e9098"/><circle cx="1116" cy="70.0" r="3.4" fill="#8e9098"/><circle cx="1103.4" cy="62.75" r="3.4" fill="#8e9098"/><circle cx="1103.4" cy="48.25" r="3.4" fill="#8e9098"/><circle cx="1116" cy="55.5" r="3.4" fill="#8e9098"/>
<polygon points="1202.0,41.0 1214.6,48.2 1214.6,62.8 1202.0,70.0 1189.4,62.8 1189.4,48.2" fill="none" stroke="#a9d2ef" stroke-width="1.8"/><polyline points="1189.4,48.2 1202.0,55.5 1214.6,48.2" fill="none" stroke="#a9d2ef" stroke-width="1.8"/><line x1="1202" y1="55.5" x2="1202" y2="70" stroke="#a9d2ef" stroke-width="1.8"/><circle cx="1202" cy="41.0" r="3.4" fill="#85878e"/><circle cx="1214.6" cy="48.25" r="3.4" fill="#85878e"/><circle cx="1214.6" cy="62.75" r="3.4" fill="#85878e"/><circle cx="1202" cy="70.0" r="3.4" fill="#85878e"/><circle cx="1189.4" cy="62.75" r="3.4" fill="#85878e"/><circle cx="1189.4" cy="48.25" r="3.4" fill="#85878e"/><circle cx="1202" cy="55.5" r="3.4" fill="#85878e"/>
<polygon points="1288.0,41.0 1300.6,48.2 1300.6,62.8 1288.0,70.0 1275.4,62.8 1275.4,48.2" fill="none" stroke="#85878e" stroke-width="1.8"/><polyline points="1275.4,48.2 1288.0,55.5 1300.6,48.2" fill="none" stroke="#85878e" stroke-width="1.8"/><line x1="1288" y1="55.5" x2="1288" y2="70" stroke="#85878e" stroke-width="1.8"/><circle cx="1288" cy="41.0" r="3.4" fill="#b4d8f2"/><circle cx="1300.6" cy="48.25" r="3.4" fill="#b4d8f2"/><circle cx="1300.6" cy="62.75" r="3.4" fill="#b4d8f2"/><circle cx="1288" cy="70.0" r="3.4" fill="#b4d8f2"/><circle cx="1275.4" cy="62.75" r="3.4" fill="#b4d8f2"/><circle cx="1275.4" cy="48.25" r="3.4" fill="#b4d8f2"/><circle cx="1288" cy="55.5" r="3.4" fill="#b4d8f2"/>
<circle cx="1376.6" cy="45.5" r="8.2" fill="#2f3033"/><line x1="1376.6" y1="50" x2="1376.6" y2="70" stroke="#2f3033" stroke-width="2"/><circle cx="1376.6" cy="70" r="3" fill="#2f3033"/>
<rect x="1450" y="44" width="24" height="19" fill="none" stroke="#111" stroke-width="2.4" stroke-dasharray="4.5,3.5"/><path d="M1469,57 L1469,70 L1472.5,67 L1475,72.5 L1477,71.5 L1474.5,66 L1478.5,65.5 Z" fill="#111"/>
<polygon points="1534.5,46.7 1546.5,54.0 1546.5,68.6 1534.5,61.3" fill="#e2e2e2"/><g fill="none" stroke="#bdbdbd" stroke-width="1.4"><polygon points="1546.5,39.4 1558.5,46.7 1558.5,61.3 1546.5,68.6 1534.5,61.3 1534.5,46.7"/><polyline points="1534.5,46.7 1546.5,54.0 1558.5,46.7"/><line x1="1546.5" y1="54" x2="1546.5" y2="68.6"/><line x1="1540.5" y1="43" x2="1540.5" y2="65"/><line x1="1534.5" y1="54" x2="1546.5" y2="61"/><line x1="1552.5" y1="43" x2="1552.5" y2="65"/><line x1="1546.5" y1="61" x2="1558.5" y2="54"/></g><circle cx="1546.5" cy="39.4" r="3.2" fill="#c4c4c4"/><circle cx="1558.5" cy="46.7" r="3.2" fill="#c4c4c4"/><circle cx="1558.5" cy="61.3" r="3.2" fill="#c4c4c4"/><circle cx="1546.5" cy="68.6" r="3.2" fill="#c4c4c4"/><circle cx="1534.5" cy="61.3" r="3.2" fill="#c4c4c4"/><circle cx="1534.5" cy="46.7" r="3.2" fill="#c4c4c4"/><circle cx="1546.5" cy="54" r="3.2" fill="#c4c4c4"/>
<g fill="none" stroke="#474a55" stroke-width="1.6" stroke-linejoin="round"><path d="M1627,62 L1627,50 Q1628,42 1637,38 L1641,36 L1648,40 L1648,57 L1633,66 Z"/><path d="M1641,36 L1648,40 M1634,40 L1641,44 L1648,40 M1641,44 Q1634,47 1633,56 L1633,66 M1627,53 L1633,56"/><path d="M1627,62 L1615,69 L1622,72 L1634,65"/><path d="M1619,68 L1623,70 M1622,66 L1626,68 M1625,64 L1629,66"/></g>
</svg>
<div class="r" style="left:1358px;top:16px;width:58px;height:22px;box-sizing:border-box;border:2px solid #e0e0e0;border-radius:12px;background:#fff"></div>
<div class="t" style="left:1367px;top:20.0px;font-size:16px;color:#5b5f6b;font-weight:bold;letter-spacing:-0.3px">BETA</div>
</body></html>
